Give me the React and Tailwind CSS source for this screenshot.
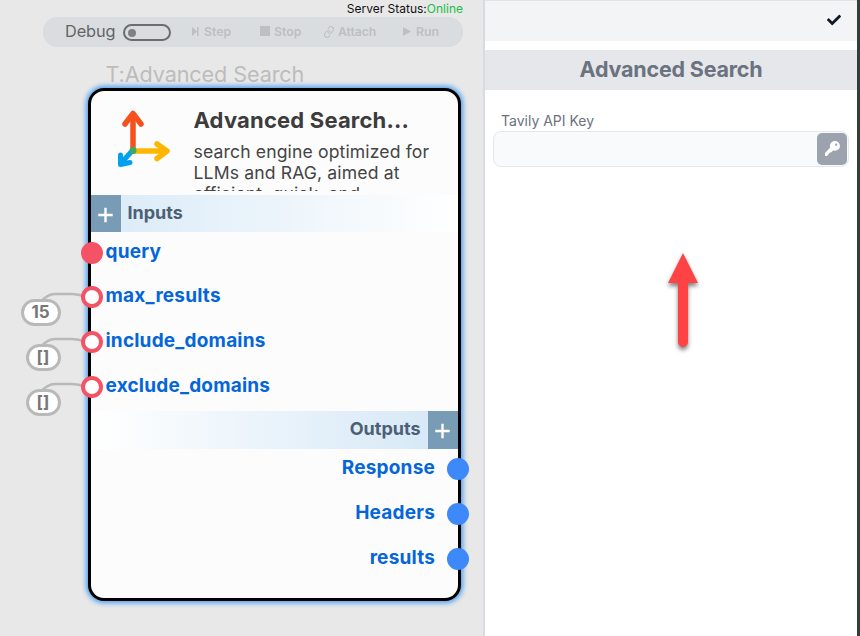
import { FaCheck } from "react-icons/fa";
import { Link } from "lucide-react";

const inputs = [
  { name: "query", nudge: "mt-[1px] -mb-[1px]" },
  { name: "max_results", nudge: "", value: "15", pill: "w-[40px] -left-[70px]" },
  { name: "include_domains", nudge: "", value: "[]", pill: "w-[35px] -left-[65px]" },
  { name: "exclude_domains", nudge: "", value: "[]", pill: "w-[35px] -left-[65px]" },
];
const outputs = ["Response", "Headers", "results"];

function Plus() {
  return (
    <span className="flex h-full w-[30px] shrink-0 items-center justify-center bg-[#789bb6] pt-[2px]">
      <svg width="16" height="16" viewBox="0 0 16 16" stroke="#fff" strokeWidth="2.4">
        <path d="M7.500 .8v14.400M.3 8h14.400" />
      </svg>
    </span>
  );
}

function Toolbar() {
  return (
    <div className="ml-[43px] flex h-[30px] w-[420px] items-center rounded-[14px] bg-[#d9dde0] text-[12.3px] font-semibold text-[#bdbfc0]">
      <span className="mb-[2px] ml-[22px] w-[58px] text-[16.3px] font-normal tracking-[-0.1px] text-[#646464]">Debug</span>
      <span className="mt-[1px] flex h-[17px] w-[48px] items-center rounded-full border-2 border-[#6d6d6d] pl-[3px]">
        <span className="size-[8px] rounded-full bg-[#808080]" />
      </span>
      <span className="ml-[21px] flex w-[68px] items-center">
        <svg className="mr-[5px] mb-[2px]" width="7" height="9" viewBox="0 0 7 9" fill="currentColor">
          <path d="M0 0l5 4.500L0 9zM5 0h1.500v9H5z" />
        </svg>
        Step
      </span>
      <span className="flex w-[63px] items-center">
        <span className="mr-[4px] mb-[2px] size-[10px] bg-[#bdbfc0]" />Stop
      </span>
      <span className="flex w-[80px] items-center">
        <Link className="mr-[3px] mb-[1px] size-[12px] -rotate-12" />
        <span className="tracking-[-0.1px]">Attach</span>
      </span>
      <span className="flex items-center">
        <svg className="mr-[5px] mb-[2px]" width="8" height="9" viewBox="0 0 8 9"><path d="M0 0l8 4.5L0 9z" fill="currentColor" /></svg>Run
      </span>
    </div>
  );
}

function NodeCard() {
  return (
    <div className="absolute top-[88px] left-[87.5px] flex h-[513px] w-[373px] flex-col rounded-[16px] border-3 border-black bg-[#fcfcfc] shadow-[0_0_5px_2px_#4a9ff0]">
      <div className="flex h-[104px] shrink-0 pl-[24px]">
        <svg className="mt-[17px] shrink-0" width="58" height="62" viewBox="0 0 58 62" fill="none" strokeLinecap="round" strokeLinejoin="round">
          <path d="M18 42V7" stroke="#f4511e" strokeWidth="5.5" />
          <path d="M10 16L18 5.500L26 16" stroke="#f4511e" strokeWidth="5.500" />
          <path d="M18 43H49" stroke="#ffb600" strokeWidth="5.500" />
          <path d="M42 36L52 43L42 50.500" stroke="#ffb600" strokeWidth="5.500" />
          <path d="M18 42L7 54M5.500 47V56.500M5.500 56.500L15 54.500" stroke="#03a0ef" strokeWidth="5" />
          <circle cx="18" cy="42.500" r="3.500" fill="#34ac6c" />
        </svg>
        <div className="ml-[21px] h-[100px] overflow-hidden pt-[14px] text-[#3c3c3c]">
          <div className="h-[36px] text-[22px] leading-[30px] font-bold tracking-[0.19px]">Advanced Search...</div>
          <p className="w-[250px] text-[17.6px] leading-[21px] tracking-[0.13px] text-[#444]">
            search engine optimized for<br />LLMs and RAG, aimed at<br />efficient, quick, and
          </p>
        </div>
      </div>
      <div className="flex h-[37px] shrink-0 items-center bg-linear-to-r from-[#d9eaf7] to-white text-[18px] font-bold text-[#4c6075]">
        <Plus />
        <span className="ml-[7px] pb-[2px]">Inputs</span>
      </div>
      <div className="flex h-[179px] shrink-0 flex-col">
        {inputs.map((p) => (
          <div key={p.name} className={"relative flex h-[45px] shrink-0 items-center " + p.nudge}>
            {p.value && (
              <>
                <svg className="absolute top-[14px] -left-[53px]" width="48" height="20" viewBox="0 0 48 20" fill="none" stroke="#b9b9b9" strokeWidth="2.500">
                  <path d="M3 11Q9 3 17 3H34Q41 3 47 6" />
                </svg>
                <span className={"absolute top-[22px] flex h-[27px] items-center justify-center rounded-full border-3 border-[#b9b9b9] bg-white text-[17px] font-bold text-[#777] " + p.pill}>
                  {p.value}
                </span>
              </>
            )}
            <span className={"absolute top-[9px] -left-[10px] size-[22px] rounded-full border-4 border-[#f45365] " + (p.value ? "bg-white" : "bg-[#f45365]")} />
            <span className="ml-[15px] pb-[7px] text-[19px] font-bold tracking-[0.2px] text-[#0466d8]">{p.name}</span>
          </div>
        ))}
      </div>
      <div className="flex h-[38px] shrink-0 items-center justify-end bg-linear-to-l from-[#d4e7f6] to-white text-[18px] font-bold text-[#4c6075]">
        <span className="mr-[7px] pb-[3px]">Outputs</span>
        <Plus />
      </div>
      <div className="flex flex-col">
        {outputs.map((name) => (
          <div key={name} className="relative flex h-[45px] items-center justify-end">
            <span className="mr-[22.5px] pb-[7px] text-[19px] font-bold tracking-[0.2px] text-[#0466d8]">{name}</span>
            <span className="absolute top-[9px] -right-[11.5px] size-[22px] rounded-full bg-[#3d89f9]" />
          </div>
        ))}
      </div>
    </div>
  );
}

export default function App() {
  return (
    <div className="flex h-[636px] w-[860px] overflow-hidden bg-white font-['Inter',sans-serif]">
      <main className="relative h-full w-[485px] shrink-0 border-r-2 border-[#d8dce0] bg-[#e8e8e8]">
        <div className="h-[17px] pr-[20px] text-right text-[12px] leading-[18px] text-[#111]">
          Server Status:<span className="text-[#20bd48]">Online</span>
        </div>
        <Toolbar />
        <div className="mt-[13px] ml-[105.5px] text-[21.6px] leading-[28px] tracking-[-0.1px] text-[#bcbcbc]">T:Advanced Search</div>
        <NodeCard />
      </main>
      <aside className="flex w-[372px] shrink-0 flex-col">
        <div className="flex h-[41px] justify-end border-t border-[#e2e4e7] bg-[#f3f4f6] pt-[12px] pr-[16px] text-[#111827]">
          <FaCheck className="size-[14px]" />
        </div>
        <h1 className="mt-[9px] h-[40px] bg-[#e5e7eb] text-center text-[21.5px] leading-[39px] font-bold tracking-[-0.2px] text-[#6b7280]">Advanced Search</h1>
        <label className="mt-[21px] ml-[16px] h-[20px] text-[14px] leading-[20px] text-[#6b7280]">Tavily API Key</label>
        <div className="ml-[8px] flex h-[36px] w-[356px] items-center justify-end rounded-[8px] border border-[#e5e7eb] bg-[#f9fafb] pr-[1px]">
          <button className="flex h-[32px] w-[30px] items-center justify-center rounded-[5px] bg-[#9ca3af] pb-[2px] text-white">
            <svg width="15" height="15" viewBox="0 0 15 15" fill="currentColor">
              <path fillRule="evenodd" d="M10 0a4.900 4.900 0 0 1 0 9.800l-2-.2-1.500 1.700-1.700.3-1.100 1.500L2 15H.3L0 14.600v-2.700l5.200-5.400A4.900 4.900 0 0 1 10 0zM11.200 2.500a1.150 1.150 0 1 0 0 2.300 1.150 1.150 0 0 0 0-2.300z" />
            </svg>
          </button>
        </div>
        <svg className="mt-[78px] ml-[173px] overflow-visible drop-shadow-[0_3px_2px_rgba(0,0,0,0.5)]" width="50" height="110" viewBox="0 0 50 110" fill="#ff4345">
          <path d="M25 8L40 38H30V97A5 5 0 0 1 20 97V38H10Z" />
        </svg>
      </aside>
      <div className="w-[3px] bg-[#383b3b]" />
    </div>
  );
}
